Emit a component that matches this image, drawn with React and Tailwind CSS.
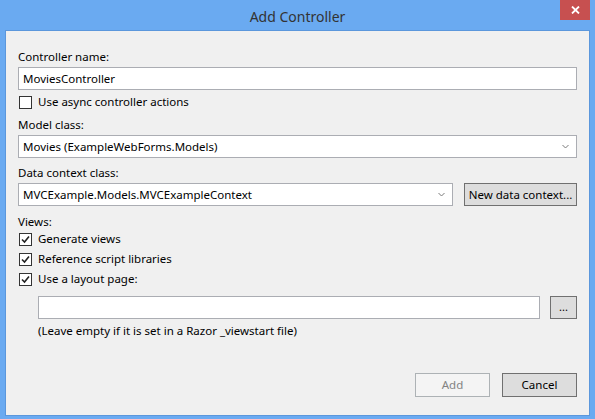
import { useState } from 'react';

const font = { fontFamily: '"Noto Sans", "Segoe UI", sans-serif' };

// Small Windows 8 style check box with a label
const CheckRow = ({ label, checked }) => (
  <label className="flex items-center h-[16px] text-[11.5px] text-black">
    <span className="ml-[1px] w-[13px] h-[13px] border border-[#333333] bg-white flex items-center justify-center">
      {checked && (
        <svg width="9" height="9" viewBox="0 0 9 9">
          <path d="M1 4.5 L3.5 7 L8 1.5" fill="none" stroke="#222" strokeWidth="1.6" />
        </svg>
      )}
    </span>
    <span className="ml-[6px]">{label}</span>
  </label>
);

const Chevron = () => (
  <svg width="7" height="5" viewBox="0 0 7 5" className="shrink-0">
    <path d="M0.5 1 L3.5 4 L6.5 1" fill="none" stroke="#7a7a7a" strokeWidth="1" />
  </svg>
);

const Select = ({ value, className = '' }) => (
  <div className={`h-[23px] border border-[#abadb3] bg-white flex items-center pl-[4px] pr-[7px] text-[11.5px] text-black ${className}`}>
    <span className="flex-1 truncate">{value}</span>
    <Chevron />
  </div>
);

export default function App() {
  const [name] = useState('MoviesController');

  return (
    <div className="w-[595px] h-[419px] bg-[#6aaaf1] flex flex-col" style={font}>
      {/* Title bar */}
      <div className="relative h-[30px] flex items-center justify-center">
        <span className="text-[14px] text-[#333333] pt-[3px]">Add Controller</span>
        <button className="absolute top-0 right-[5px] w-[30px] h-[20px] bg-[#c75050] flex items-center justify-center">
          <svg width="9" height="8" viewBox="0 0 9 8">
            <path d="M1 0.5 L8 7.5 M8 0.5 L1 7.5" stroke="#fff" strokeWidth="1.8" />
          </svg>
        </button>
      </div>

      {/* Client area */}
      <div className="mx-[5px] h-[386px] border border-[#5b97dc] bg-[#f0f0f0] px-[12px] pt-[18px] pb-[18px] flex flex-col text-[11.5px] text-black">
        <div className="h-[16px] leading-[16px] mb-[2px]">Controller name:</div>
        <div className="h-[23px] border border-[#abadb3] bg-white flex items-center pl-[4px]">{name}</div>

        <div className="mt-[4px]">
          <CheckRow label="Use async controller actions" checked={false} />
        </div>

        <div className="mt-[7px] h-[16px] leading-[16px] mb-[2px]">Model class:</div>
        <Select value="Movies (ExampleWebForms.Models)" />

        <div className="mt-[7px] h-[16px] leading-[16px] mb-[2px]">Data context class:</div>
        <div className="flex gap-[11px]">
          <Select value="MVCExample.Models.MVCExampleContext" className="flex-1" />
          <button className="w-[113px] h-[23px] border border-[#707070] bg-[#dddddd] text-[11.5px]">
            New data context...
          </button>
        </div>

        <div className="mt-[8px] h-[16px] leading-[16px]">Views:</div>
        <div className="mt-[1px] flex flex-col gap-[4px]">
          <CheckRow label="Generate views" checked />
          <CheckRow label="Reference script libraries" checked />
          <CheckRow label="Use a layout page:" checked />
        </div>

        <div className="mt-[9px] pl-[20px] flex gap-[10px]">
          <div className="flex-1 h-[23px] border border-[#abadb3] bg-white" />
          <button className="w-[27px] h-[23px] border border-[#707070] bg-[#dddddd] text-[11px] leading-[10px] pb-[2px]">
            ...
          </button>
        </div>
        <div className="mt-[4px] pl-[20px] h-[16px] leading-[16px]">
          (Leave empty if it is set in a Razor _viewstart file)
        </div>

        <div className="mt-auto flex justify-end gap-[12px]">
          <button className="w-[75px] h-[24px] border border-[#adb2b5] bg-[#f4f4f4] text-[#838383] text-[11.5px]">
            Add
          </button>
          <button className="w-[75px] h-[24px] border border-[#707070] bg-[#dddddd] text-[11.5px]">
            Cancel
          </button>
        </div>
      </div>
    </div>
  );
}
